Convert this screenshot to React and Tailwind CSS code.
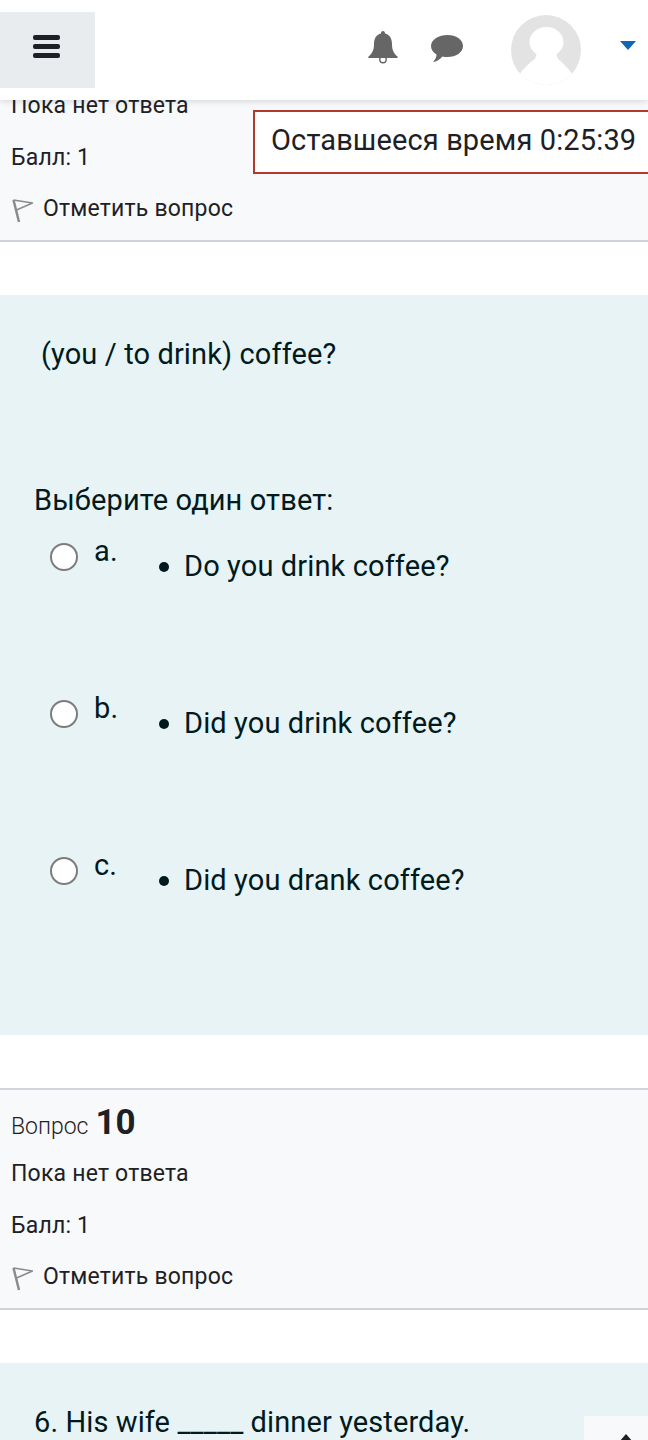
import React from 'react';

function FlagIcon() {
  return (
    <svg width="23" height="27" viewBox="0 0 23 27" fill="none" className="shrink-0">
      <path d="M2.5 4 L8 26" stroke="#8a8a8a" strokeWidth="2.4" />
      <path d="M2.5 4 L21.5 7 L5.5 14" stroke="#8a8a8a" strokeWidth="1.4" strokeLinejoin="round" />
    </svg>
  );
}

function QuestionInfo({ number, className }) {
  return (
    <div className={`bg-[#f8f9fa] border-y-2 border-[#ced4da] pl-[11px] h-[222px] text-[23px] tracking-[0.2px] text-[#1d2125] ${className}`}>
      <div className="h-[58px] flex items-baseline pt-[15px]">
        <span className="text-[23px] font-light tracking-normal">Вопрос</span>
        <span className="text-[35px] font-bold ml-[7px] leading-none tracking-normal">{number}</span>
      </div>
      <div className="h-[52px] flex items-center">Пока нет ответа</div>
      <div className="h-[52px] flex items-center">Балл: 1</div>
      <div className="h-[50px] flex items-center gap-[9px]">
        <FlagIcon />
        <span>Отметить вопрос</span>
      </div>
    </div>
  );
}

function Option({ letter, text }) {
  return (
    <div className="h-[157px] flex pl-[50px]">
      <div className="w-[28px] h-[28px] mt-[12px] rounded-full bg-white border-2 border-[#7c7c7c] shrink-0" />
      <span className="w-[65px] ml-[16px] leading-[40px] shrink-0">{letter}</span>
      <div className="flex items-start mt-[15px] leading-[40px]">
        <span className="w-[10px] h-[10px] rounded-full bg-[#001a1e] mt-[16px] mr-[15px] shrink-0" />
        <span>{text}</span>
      </div>
    </div>
  );
}

export default function App() {
  return (
    <div className="relative w-[648px] h-[1440px] overflow-hidden bg-white font-['Roboto',sans-serif]">
      {/* Top bar */}
      <header className="relative z-10 h-[100px] bg-white shadow-[0_2px_6px_rgba(0,0,0,0.12)] flex items-start">
        <button className="w-[95px] h-[76px] mt-[12px] bg-[#e9ecef] flex flex-col items-center justify-center gap-[4px] pr-[2px] pb-[7px]">
          <span className="w-[27px] h-[5px] rounded-[2px] bg-[#1d2125]" />
          <span className="w-[27px] h-[5px] rounded-[2px] bg-[#1d2125]" />
          <span className="w-[27px] h-[5px] rounded-[2px] bg-[#1d2125]" />
        </button>
        <svg width="32" height="34" viewBox="0 0 32 34" className="ml-[272px] mt-[30px]">
          <path d="M16 1 C17.4 1 18 2 18 3.5 C23 4.8 25 9 25 14 C25 20 27 24 30.5 26.5 C31 27 30.8 28 30 28 L2 28 C1.2 28 1 27 1.5 26.5 C5 24 7 20 7 14 C7 9 9 4.8 14 3.5 C14 2 14.6 1 16 1 Z" fill="#666" />
          <circle cx="16" cy="29.5" r="3.2" fill="none" stroke="#666" strokeWidth="1.4" />
        </svg>
        <svg width="34" height="30" viewBox="0 0 34 30" className="ml-[31px] mt-[34px]">
          <path d="M17.5 1 C26 1 33 5.5 33 12 C33 18.5 26 23 17.5 23 C15.5 23 14 22.8 12.5 22.4 C10 25.5 6.5 27.5 3 28 C5.5 25.5 6.5 23 6.5 20.6 C3 18.4 1 15.4 1 12 C1 5.5 9 1 17.5 1 Z" fill="#666" />
        </svg>
        <svg width="70" height="70" viewBox="0 0 70 70" className="ml-[47px] mt-[15px]">
          <defs>
            <clipPath id="avatarClip">
              <circle cx="35" cy="35" r="35" />
            </clipPath>
          </defs>
          <circle cx="35" cy="35" r="35" fill="#e3e3e3" />
          <g clipPath="url(#avatarClip)">
            <ellipse cx="35.5" cy="27" rx="17" ry="15" fill="#fff" />
            <path d="M26 38 L45 38 L47 44 C52 48 58 54 61 59 L70 59 L70 70 L0 70 L0 59 L9 59 C12 54 18 48 24 44 Z" fill="#fff" />
          </g>
        </svg>
        <svg width="16" height="9" viewBox="0 0 16 9" className="ml-[39px] mt-[41px]">
          <path d="M0 0 L16 0 L8 9 Z" fill="#1166b5" />
        </svg>
      </header>

      <QuestionInfo number="9" className="-mt-[80px]" />

      {/* Timer box */}
      <div className="absolute left-[253px] top-[110px] w-[420px] h-[64px] bg-white border-2 border-[#b13a2c] z-[5] flex items-center pl-[16px] pb-[2px] text-[29px] tracking-[0.13px] text-[#1d2125]">
        Оставшееся время 0:25:39
      </div>

      <section className="mt-[53px] h-[740px] bg-[#e7f3f5] text-[#001a1e] text-[29px] tracking-[0.12px]">
        <p className="pl-[41px] pt-[39px] h-[180px] leading-[40px]">(you / to drink) coffee?</p>
        <p className="pl-[34px] h-[56px] leading-[50px]">Выберите один ответ:</p>
        <Option letter="a." text="Do you drink coffee?" />
        <Option letter="b." text="Did you drink coffee?" />
        <Option letter="c." text="Did you drank coffee?" />
      </section>

      <QuestionInfo number="10" className="mt-[53px]" />

      <section className="mt-[53px] h-[100px] bg-[#e7f3f5] text-[#001a1e] text-[29px] tracking-[0.1px] pl-[34px] pt-[39px] leading-[40px]">
        6. His wife _____ dinner yesterday.
      </section>

      {/* Back to top button */}
      <div className="absolute left-[584px] top-[1416px] w-[64px] h-[24px] bg-[#f8f9fa] flex justify-center pt-[18px] pl-[20px]">
        <svg width="14" height="8" viewBox="0 0 14 8" className="shrink-0">
          <path d="M7 0 L14 8 L0 8 Z" fill="#1d2125" />
        </svg>
      </div>
    </div>
  );
}
